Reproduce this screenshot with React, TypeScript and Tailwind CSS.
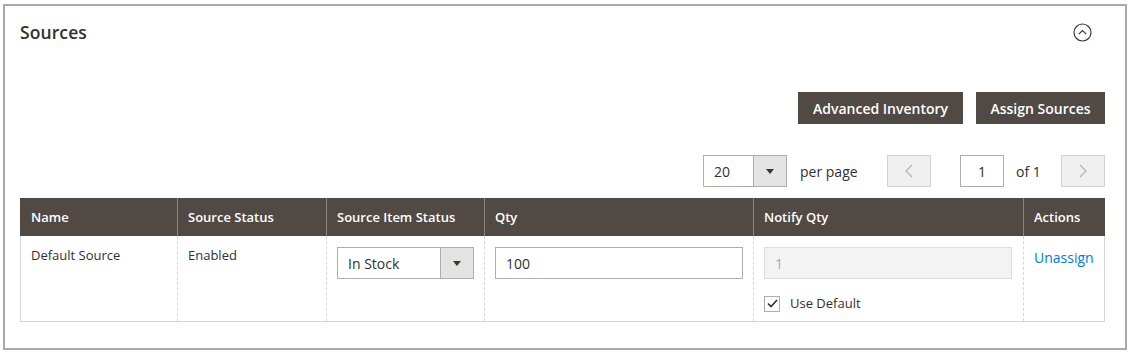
import React from "react";

const font = { fontFamily: '"Open Sans", "Noto Sans", sans-serif' };

function Caret() {
  return (
    <svg width="8" height="5" viewBox="0 0 8 5">
      <path d="M0 0 L8 0 L4 5 Z" fill="#41362f" />
    </svg>
  );
}

export default function App() {
  return (
    <div className="w-[1131px] h-[357px] bg-white text-[#303030]" style={font}>
      <div className="h-[3px]" />
      <div className="ml-[3px] mt-[1px] w-[1124px] h-[346px] border-2 border-[#a9a9a9] flex flex-col">
        {/* Title row */}
        <div className="h-[52px] flex items-center justify-between pl-[15px] pr-[33px]">
          <div className="text-[17.5px] font-semibold text-[#303030] tracking-[0.1px]">Sources</div>
          <svg width="19" height="19" viewBox="0 0 19 19">
            <circle cx="9.5" cy="9.5" r="8.5" fill="none" stroke="#41362f" strokeWidth="1.2" />
            <path d="M5.8 11.2 L9.5 7.5 L13.2 11.2" fill="none" stroke="#41362f" strokeWidth="1.2" />
          </svg>
        </div>

        {/* Buttons row */}
        <div className="mt-[34px] flex justify-end pr-[20px] gap-[13px]">
          <button className="h-[32px] w-[165px] bg-[#514943] text-white text-[14px] font-semibold">
            Advanced Inventory
          </button>
          <button className="h-[32px] w-[129px] bg-[#514943] text-white text-[14px] font-semibold">
            Assign Sources
          </button>
        </div>

        {/* Pagination row */}
        <div className="mt-[31px] flex justify-end items-center pr-[20px] text-[14px]">
          <div className="flex h-[32px] w-[84px] border border-[#adadad]">
            <div className="flex-1 flex items-center pl-[10px] text-[14px]">20</div>
            <div className="w-[33px] bg-[#e3e3e3] border-l border-[#adadad] flex items-center justify-center">
              <Caret />
            </div>
          </div>
          <span className="ml-[13px] w-[58px]">per page</span>
          <div className="ml-[29px] h-[32px] w-[44px] bg-[#f0f0f0] border border-[#d1d1d1] flex items-center justify-center">
            <svg width="8" height="14" viewBox="0 0 8 14">
              <path d="M7 1 L1 7 L7 13" fill="none" stroke="#b5b5b5" strokeWidth="1.3" />
            </svg>
          </div>
          <div className="ml-[29px] h-[32px] w-[44px] border border-[#adadad] flex items-center justify-center">1</div>
          <span className="ml-[12px] w-[25px]">of 1</span>
          <div className="ml-[20px] h-[32px] w-[44px] bg-[#f0f0f0] border border-[#d1d1d1] flex items-center justify-center">
            <svg width="8" height="14" viewBox="0 0 8 14">
              <path d="M1 1 L7 7 L1 13" fill="none" stroke="#b5b5b5" strokeWidth="1.3" />
            </svg>
          </div>
        </div>

        {/* Table */}
        <div className="mt-[11px] ml-[15px] w-[1085px] text-[14px]">
          <div className="flex h-[38px] bg-[#514943] text-white font-semibold text-[13px]">
            <div className="w-[158px] pl-[11px] pt-[1px] flex items-center border-r border-[#8a8380]">Name</div>
            <div className="w-[149px] pl-[10px] pt-[1px] flex items-center border-r border-[#8a8380]">Source Status</div>
            <div className="w-[158px] pl-[10px] pt-[1px] flex items-center border-r border-[#8a8380]">Source Item Status</div>
            <div className="w-[269px] pl-[10px] pt-[1px] flex items-center border-r border-[#8a8380]">Qty</div>
            <div className="w-[270px] pl-[10px] pt-[1px] flex items-center border-r border-[#8a8380]">Notify Qty</div>
            <div className="flex-1 pl-[10px] pt-[1px] flex items-center">Actions</div>
          </div>
          <div className="flex h-[86px] border-x border-b border-[#d6d6d6]">
            <div className="w-[157px] pl-[10px] pt-[10px] text-[13px] border-r border-dashed border-[#d6d6d6]">Default Source</div>
            <div className="w-[149px] pl-[10px] pt-[10px] text-[13px] border-r border-dashed border-[#d6d6d6]">Enabled</div>
            <div className="w-[158px] pl-[10px] pt-[11px] border-r border-dashed border-[#d6d6d6]">
              <div className="flex h-[32px] w-[137px] border border-[#adadad]">
                <div className="flex-1 flex items-center pl-[10px]">In Stock</div>
                <div className="w-[33px] bg-[#e3e3e3] border-l border-[#adadad] flex items-center justify-center">
                  <Caret />
                </div>
              </div>
            </div>
            <div className="w-[269px] pl-[10px] pt-[11px] border-r border-dashed border-[#d6d6d6]">
              <div className="h-[32px] w-[248px] border border-[#adadad] flex items-center pl-[10px]">100</div>
            </div>
            <div className="w-[270px] pl-[10px] pt-[11px] border-r border-dashed border-[#d6d6d6]">
              <div className="h-[32px] w-[248px] border border-[#dcdcdc] bg-[#f3f3f3] flex items-center pl-[10px] text-[#a8a8a8]">1</div>
              <div className="mt-[15px] flex items-center">
                <div className="w-[16px] h-[16px] border border-[#adadad] bg-white flex items-center justify-center">
                  <svg width="11" height="9" viewBox="0 0 11 9">
                    <path d="M1 4.5 L4 7.5 L10 1" fill="none" stroke="#303030" strokeWidth="1.6" />
                  </svg>
                </div>
                <span className="ml-[10px] text-[13px]">Use Default</span>
              </div>
            </div>
            <div className="flex-1 pl-[10px] pt-[11px] text-[#007bdb]">Unassign</div>
          </div>
        </div>
      </div>
    </div>
  );
}
